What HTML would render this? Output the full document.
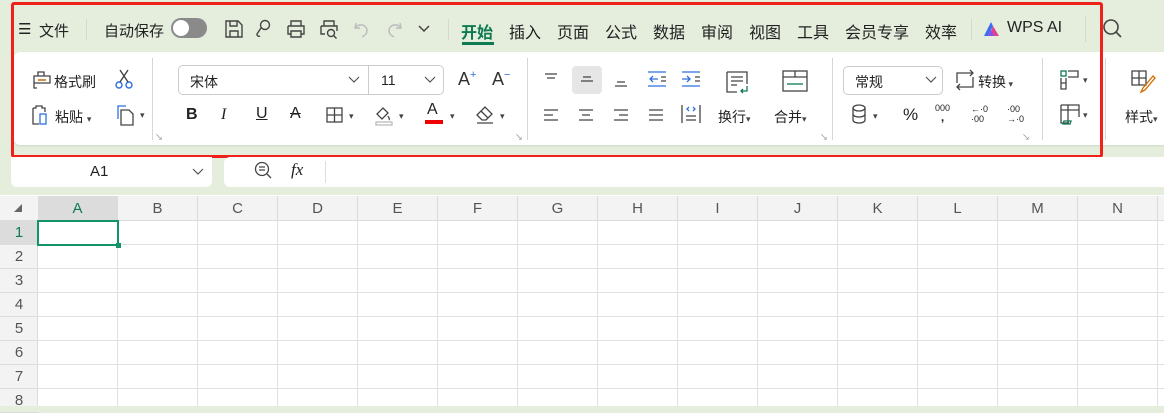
<!DOCTYPE html>
<html><head><meta charset="utf-8"><style>
*{margin:0;padding:0;box-sizing:border-box}
body{width:1164px;height:406px;overflow:hidden;background:#e5eedd;font-family:"Liberation Sans","Noto Sans CJK SC",sans-serif;position:relative;color:#222}
.a{position:absolute;white-space:nowrap}
.t{font-size:15px}
.s{font-size:14px}
.tab{position:absolute;top:19px;font-size:16px;color:#222}
svg{position:absolute;overflow:visible}
.sep{position:absolute;width:1px;background:#d4d8d0}
.ch{position:absolute;top:196px;height:25px;width:80px;text-align:center;font-size:15px;color:#555;line-height:25px;border-right:1px solid #dcdcdc}
.rh{position:absolute;left:0;width:38px;height:24px;text-align:center;font-size:15px;color:#555;line-height:24px;border-bottom:1px solid #dcdcdc}
.dd{font-size:9px;color:#444}
</style></head><body>
<!-- top bar -->
<div class="a" style="left:18px;top:20px;font-size:15px">☰</div>
<div class="a t" style="left:39px;top:20px">文件</div>
<div class="sep" style="left:86px;top:19px;height:21px"></div>
<div class="a t" style="left:104px;top:20px">自动保存</div>
<div class="a" style="left:171px;top:18px;width:36px;height:20px;border-radius:10px;background:#8a8a8a"><div style="position:absolute;left:2px;top:2px;width:16px;height:16px;border-radius:8px;background:#fff"></div></div>
<svg style="left:224px;top:19px" width="20" height="20" fill="none" stroke="#444" stroke-width="1.4"><path d="M2 2h12l4 4v12H2z M6 2v5h7V2 M6 18v-6h8v6"/></svg>
<svg style="left:254px;top:19px" width="20" height="20" fill="none" stroke="#444" stroke-width="1.4"><circle cx="11" cy="6" r="4.5"/><path d="M7 9l-4 6a2 2 0 0 0 3 2"/></svg>
<svg style="left:286px;top:19px" width="20" height="20" fill="none" stroke="#444" stroke-width="1.4"><path d="M5 7V2h10v5 M2 7h16v8h-3 M5 15H2V7 M5 12h10v6H5z"/></svg>
<svg style="left:319px;top:19px" width="20" height="20" fill="none" stroke="#444" stroke-width="1.4"><path d="M5 7V2h10v5 M2 7h16v5 M2 7v8h4"/><circle cx="12" cy="14" r="3.5"/><path d="M14.5 16.5l3 3"/></svg>
<svg style="left:353px;top:19px" width="18" height="20" fill="none" stroke="#bbb" stroke-width="1.4"><path d="M3 4l-1 5 5 0 M2 9c3-5 12-4 12 3 0 3-3 5-5 6"/></svg>
<svg style="left:385px;top:19px" width="18" height="20" fill="none" stroke="#bbb" stroke-width="1.4"><path d="M15 4l1 5-5 0 M16 9c-3-5-12-4-12 3 0 3 3 5 5 6"/></svg>
<svg style="left:417px;top:24px" width="14" height="10" fill="none" stroke="#444" stroke-width="1.5"><path d="M2 2l5 5 5-5"/></svg>
<div class="sep" style="left:448px;top:19px;height:21px"></div>
<div class="tab" style="left:461px;color:#0e7a52;font-weight:bold">开始</div>
<div class="a" style="left:462px;top:42px;width:32px;height:3px;background:#0e7a52"></div>
<div class="tab" style="left:509px">插入</div>
<div class="tab" style="left:557px">页面</div>
<div class="tab" style="left:605px">公式</div>
<div class="tab" style="left:653px">数据</div>
<div class="tab" style="left:701px">审阅</div>
<div class="tab" style="left:749px">视图</div>
<div class="tab" style="left:797px">工具</div>
<div class="tab" style="left:845px">会员专享</div>
<div class="tab" style="left:925px">效率</div>
<div class="sep" style="left:971px;top:19px;height:21px"></div>
<svg style="left:983px;top:21px" width="18" height="16"><path d="M8 1L1 15h4L10 5z" fill="#3d6cf0"/><path d="M10 5l6 10h-5l-3-5z" fill="#e0418e"/><path d="M5 15l3-6 3 6z" fill="#8a4ef0"/></svg>
<div class="tab" style="left:1007px">WPS AI</div>
<div class="sep" style="left:1085px;top:16px;height:26px"></div>
<svg style="left:1102px;top:18px" width="22" height="22" fill="none" stroke="#444" stroke-width="1.6"><circle cx="9" cy="9" r="7"/><path d="M14 14l5 5"/></svg>

<!-- ribbon panel -->
<div class="a" style="left:14px;top:52px;width:1160px;height:93px;background:#fff;border-radius:6px;box-shadow:0 1px 2px rgba(0,0,0,.1)"></div>
<div class="sep" style="left:152px;top:58px;height:82px"></div>
<div class="sep" style="left:527px;top:58px;height:82px"></div>
<div class="sep" style="left:832px;top:58px;height:82px"></div>
<div class="sep" style="left:1042px;top:58px;height:82px"></div>
<div class="sep" style="left:1105px;top:58px;height:82px"></div>

<svg style="left:30px;top:70px" width="22" height="20" fill="none" stroke="#444" stroke-width="1.3"><path d="M4 6h16v7H4z M8 6V2h6v4 M4 13v5h3 M8 10h8" /><path d="M8 10h8" stroke="#d36b00"/></svg>
<div class="a s" style="left:54px;top:72px">格式刷</div>
<svg style="left:114px;top:68px" width="20" height="22" fill="none" stroke="#2f6fe0" stroke-width="1.4"><circle cx="5" cy="17" r="3"/><circle cx="15" cy="17" r="3"/><path d="M6 14L14 2 M14 14L6 2" stroke="#444"/></svg>
<svg style="left:30px;top:104px" width="22" height="22" fill="none" stroke="#444" stroke-width="1.3"><path d="M3 4h3v-2h6v2h3v4 M3 4v16h6"/><rect x="10" y="10" width="6" height="10" stroke="#2f6fe0"/></svg>
<div class="a s" style="left:55px;top:107px">粘贴 <span class="dd">▾</span></div>
<svg style="left:116px;top:104px" width="20" height="22" fill="none" stroke="#444" stroke-width="1.3"><path d="M2 15V2h8" stroke="#2f6fe0"/><path d="M5 6h8l4 4v11H5z"/></svg>
<div class="a dd" style="left:140px;top:110px">▾</div>
<div class="a" style="left:155px;top:132px;font-size:8px;color:#888">↘</div>

<div class="a" style="left:178px;top:65px;width:266px;height:30px;border:1px solid #ccc;border-radius:5px"></div>
<div class="sep" style="left:368px;top:66px;height:28px;background:#ccc"></div>
<div class="a s" style="left:190px;top:72px">宋体</div>
<svg style="left:348px;top:76px" width="12" height="8" fill="none" stroke="#555" stroke-width="1.2"><path d="M1 1l5 5 5-5"/></svg>
<div class="a s" style="left:381px;top:72px">11</div>
<svg style="left:424px;top:76px" width="12" height="8" fill="none" stroke="#555" stroke-width="1.2"><path d="M1 1l5 5 5-5"/></svg>
<div class="a" style="left:458px;top:69px;font-size:18px;color:#333">A<sup style="font-size:11px;color:#2f6fe0">+</sup></div>
<div class="a" style="left:492px;top:69px;font-size:18px;color:#333">A<sup style="font-size:11px;color:#2f6fe0">−</sup></div>
<div class="a" style="left:186px;top:106px;font-size:16px;font-weight:bold">B</div>
<div class="a" style="left:221px;top:106px;font-size:16px;font-style:italic;font-family:'Liberation Serif',serif">I</div>
<div class="a" style="left:256px;top:105px;font-size:16px;text-decoration:underline">U</div>
<div class="a" style="left:290px;top:105px;font-size:16px;text-decoration:line-through">A</div>
<svg style="left:326px;top:107px" width="18" height="16" fill="none" stroke="#444" stroke-width="1.3"><rect x="1" y="1" width="15" height="14"/><path d="M8.5 1v14 M1 8h15"/></svg>
<div class="a dd" style="left:349px;top:111px">▾</div>
<svg style="left:373px;top:104px" width="22" height="22" fill="none" stroke="#444" stroke-width="1.3"><path d="M4 10l6-6 5 5-6 6z M15 12c1 2 2 3 1 4"/><rect x="3" y="18" width="16" height="3" stroke="#bbb"/></svg>
<div class="a dd" style="left:399px;top:111px">▾</div>
<div class="a" style="left:427px;top:101px;font-size:16px">A</div>
<div class="a" style="left:425px;top:120px;width:18px;height:4px;background:#e00"></div>
<div class="a dd" style="left:450px;top:111px">▾</div>
<svg style="left:474px;top:104px" width="22" height="20" fill="none" stroke="#444" stroke-width="1.3"><path d="M3 11l8-8 7 7-6 6H8z M7 7l7 7 M3 19h16"/></svg>
<div class="a dd" style="left:500px;top:111px">▾</div>
<div class="a" style="left:515px;top:132px;font-size:8px;color:#888">↘</div>

<!-- alignment -->
<svg style="left:543px;top:72px" width="16" height="12" stroke="#444" stroke-width="1.3"><path d="M2 2h12 M4 6h8"/></svg>
<div class="a" style="left:572px;top:66px;width:30px;height:28px;background:#e6e6e6;border-radius:4px"></div>
<svg style="left:579px;top:74px" width="16" height="12" stroke="#444" stroke-width="1.3"><path d="M4 3h8 M2 7h12"/></svg>
<svg style="left:613px;top:76px" width="16" height="12" stroke="#444" stroke-width="1.3"><path d="M4 6h8 M2 10h12"/></svg>
<svg style="left:647px;top:70px" width="20" height="18" fill="none" stroke="#2f6fe0" stroke-width="1.3"><path d="M1 2h18 M1 16h18 M3 9h8 M6 6l-3 3 3 3" /><path d="M14 7h5 M14 11h5" stroke="#444"/></svg>
<svg style="left:681px;top:70px" width="20" height="18" fill="none" stroke="#2f6fe0" stroke-width="1.3"><path d="M1 2h18 M1 16h18 M1 9h8 M6 6l3 3-3 3" /><path d="M14 7h5 M14 11h5" stroke="#444"/></svg>
<svg style="left:725px;top:70px" width="26" height="26" fill="none" stroke="#444" stroke-width="1.3"><path d="M2 2h20v12 M2 2v20h10 M6 7h12 M6 11h12 M6 15h6"/><path d="M22 16v5h-6 M18 19l-2 2 2 2" stroke="#0e7a52"/></svg>
<svg style="left:782px;top:70px" width="26" height="22" fill="none" stroke="#444" stroke-width="1.3"><rect x="1" y="1" width="24" height="20"/><path d="M1 7h24 M13 1v6"/><path d="M5 14h16" stroke="#0e7a52"/></svg>
<svg style="left:543px;top:108px" width="16" height="14" stroke="#444" stroke-width="1.3"><path d="M1 2h14 M1 7h9 M1 12h14"/></svg>
<svg style="left:578px;top:108px" width="16" height="14" stroke="#444" stroke-width="1.3"><path d="M1 2h14 M4 7h8 M1 12h14"/></svg>
<svg style="left:613px;top:108px" width="16" height="14" stroke="#444" stroke-width="1.3"><path d="M1 2h14 M6 7h9 M1 12h14"/></svg>
<svg style="left:648px;top:108px" width="16" height="14" stroke="#444" stroke-width="1.3"><path d="M1 2h14 M1 7h14 M1 12h14"/></svg>
<svg style="left:681px;top:104px" width="20" height="20" fill="none" stroke="#444" stroke-width="1.3"><path d="M1 1v18 M19 1v18 M5 12h10 M5 16h10"/><path d="M8 3l-2 2 2 2 M12 3l2 2-2 2" stroke="#2f6fe0"/></svg>
<div class="a s" style="left:718px;top:107px">换行<span class="dd">▾</span></div>
<div class="a s" style="left:774px;top:107px">合并<span class="dd">▾</span></div>
<div class="a" style="left:820px;top:132px;font-size:8px;color:#888">↘</div>

<!-- number -->
<div class="a" style="left:843px;top:66px;width:100px;height:29px;border:1px solid #ccc;border-radius:5px"></div>
<div class="a s" style="left:855px;top:72px">常规</div>
<svg style="left:925px;top:76px" width="12" height="8" fill="none" stroke="#555" stroke-width="1.2"><path d="M1 1l5 5 5-5"/></svg>
<svg style="left:955px;top:69px" width="20" height="22" fill="none" stroke="#444" stroke-width="1.3"><path d="M2 14V4h16 M15 1l3 3-3 3 M18 8v10H2 M5 15l-3 3 3 3"/></svg>
<div class="a s" style="left:978px;top:72px">转换<span class="dd"> ▾</span></div>
<svg style="left:851px;top:104px" width="16" height="20" fill="none" stroke="#444" stroke-width="1.3"><ellipse cx="8" cy="4" rx="6" ry="3"/><path d="M2 4v12c0 4 12 4 12 0V4 M2 10c0 4 12 4 12 0"/></svg>
<div class="a dd" style="left:873px;top:111px">▾</div>
<div class="a" style="left:903px;top:105px;font-size:17px">%</div>
<div class="a" style="left:935px;top:104px;font-size:9px;line-height:9px;text-align:center">000<br><b style="font-size:12px">,</b></div>
<div class="a" style="left:971px;top:104px;font-size:9px;line-height:10px">←·0<br>·00</div>
<div class="a" style="left:1007px;top:104px;font-size:9px;line-height:10px">·00<br>→·0</div>
<div class="a" style="left:1022px;top:132px;font-size:8px;color:#888">↘</div>
<svg style="left:1060px;top:70px" width="20" height="20" fill="none" stroke="#444" stroke-width="1.3"><rect x="1" y="1" width="5" height="5" stroke="#0e7a52"/><path d="M1 8v11h5V8 M8 1h10v6H8 M1 13h5"/></svg>
<div class="a dd" style="left:1083px;top:75px">▾</div>
<svg style="left:1060px;top:104px" width="20" height="20" fill="none" stroke="#444" stroke-width="1.3"><path d="M1 1h18v12 M1 1v18h8 M1 6h18 M8 1v18"/><path d="M4 17h7l-1 3H3z" stroke="#0e7a52"/></svg>
<div class="a dd" style="left:1083px;top:110px">▾</div>
<svg style="left:1131px;top:70px" width="28" height="24" fill="none" stroke="#444" stroke-width="1.3"><path d="M1 1h14v14H1z M1 8h14 M8 1v14"/><path d="M22 6l-10 12-2 4 4-2 10-12z" stroke="#d36b00"/></svg>
<div class="a s" style="left:1125px;top:107px">样式<span class="dd">▾</span></div>

<!-- red frame -->
<div class="a" style="left:11px;top:2px;width:1092px;height:156px;border:3px solid #f0201a;border-radius:3px"></div>

<!-- formula bar -->
<div class="a" style="left:11px;top:157px;width:201px;height:30px;background:#fff;border-radius:0 0 6px 6px"></div>
<div class="a" style="left:90px;top:163px;font-size:15px">A1</div>
<svg style="left:192px;top:168px" width="12" height="8" fill="none" stroke="#555" stroke-width="1.2"><path d="M1 1l5 5 5-5"/></svg>
<div class="a" style="left:224px;top:157px;width:950px;height:30px;background:#fff;border-radius:6px 0 0 6px"></div>
<svg style="left:254px;top:161px" width="18" height="18" fill="none" stroke="#444" stroke-width="1.3"><circle cx="8" cy="8" r="6.5"/><path d="M5 6h6 M5 9h6 M13 13l4 4"/></svg>
<div class="a" style="left:291px;top:160px;font-size:17px;font-style:italic;font-family:'Liberation Serif',serif">fx</div>
<div class="sep" style="left:325px;top:161px;height:22px;background:#ddd"></div>

<!-- grid -->
<div class="a" style="left:0;top:195px;width:1164px;height:211px;background:#fff"></div>
<div class="a" style="left:0;top:196px;width:1164px;height:25px;background:#f3f3f3;border-bottom:1px solid #dcdcdc"></div>
<div class="a" style="left:0;top:221px;width:38px;height:185px;background:#f3f3f3;border-right:1px solid #dcdcdc"></div>
<svg style="left:14px;top:204px" width="8" height="8"><path d="M8 0v8H0z" fill="#666"/></svg>
<div class="ch" style="left:38px;background:#dcdcdc;color:#0e7a52">A</div>
<div class="ch" style="left:118px">B</div><div class="ch" style="left:198px">C</div><div class="ch" style="left:278px">D</div><div class="ch" style="left:358px">E</div><div class="ch" style="left:438px">F</div><div class="ch" style="left:518px">G</div><div class="ch" style="left:598px">H</div><div class="ch" style="left:678px">I</div><div class="ch" style="left:758px">J</div><div class="ch" style="left:838px">K</div><div class="ch" style="left:918px">L</div><div class="ch" style="left:998px">M</div><div class="ch" style="left:1078px">N</div>
<div class="a" style="left:38px;top:221px;width:1126px;height:185px;
background-image:linear-gradient(to right,#e0e0e0 1px,transparent 1px),linear-gradient(to bottom,transparent 23px,#e0e0e0 23px);
background-size:80px 24px;background-position:79px 0,0 0"></div>
<div class="rh" style="top:221px;background:#dcdcdc;color:#0e7a52">1</div>
<div class="rh" style="top:245px">2</div><div class="rh" style="top:269px">3</div><div class="rh" style="top:293px">4</div><div class="rh" style="top:317px">5</div><div class="rh" style="top:341px">6</div><div class="rh" style="top:365px">7</div><div class="rh" style="top:389px">8</div>
<div class="a" style="left:37px;top:220px;width:82px;height:26px;border:2px solid #12936a"></div>
<div class="a" style="left:116px;top:243px;width:5px;height:5px;background:#12936a"></div>
</body></html>
